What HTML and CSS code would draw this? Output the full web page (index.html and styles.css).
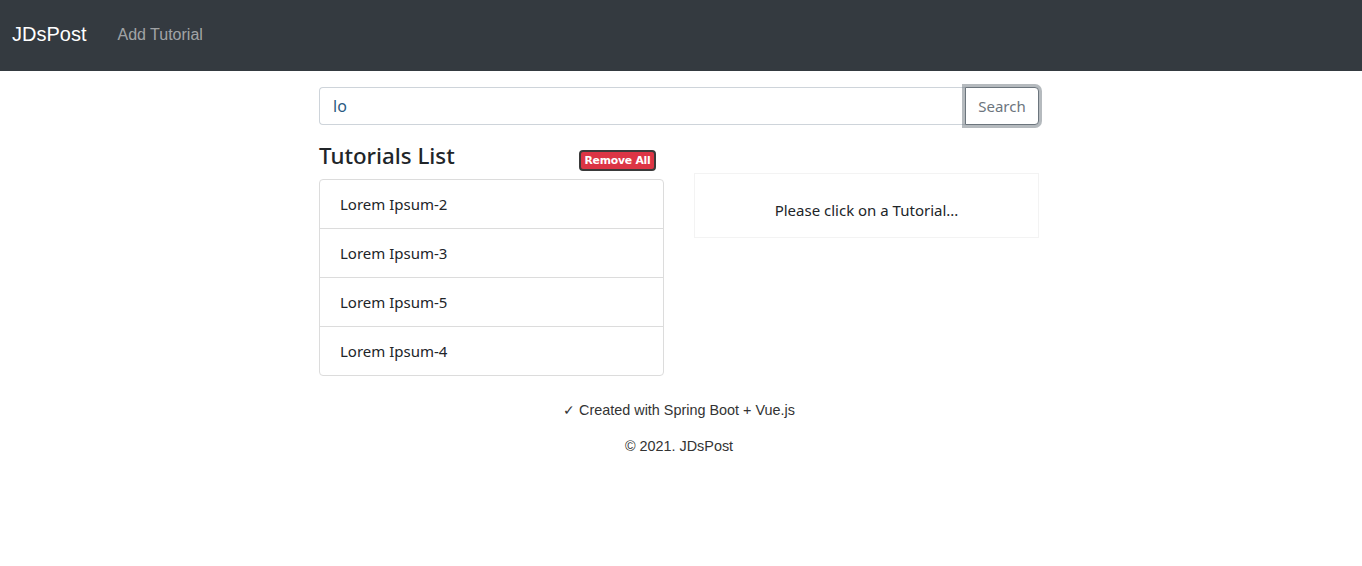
FILE: index.html
```html
<!DOCTYPE html>
<html>
<head>
<meta charset="utf-8">
<link rel="stylesheet" href="styles.css">
</head>
<body>
<nav class="navbar">
  <a class="brand">JDsPost</a>
  <a class="nav-link">Add Tutorial</a>
</nav>
<main class="container">
  <div class="input-group">
    <input class="form-control" type="text" value="lo">
    <button class="btn-search">Search</button>
  </div>
  <div class="row">
    <div class="col">
      <div class="list-head">
        <h4 class="title">Tutorials List</h4>
        <button class="btn-remove">Remove All</button>
      </div>
      <ul class="list-group">
        <li class="list-item">Lorem Ipsum-2</li>
        <li class="list-item">Lorem Ipsum-3</li>
        <li class="list-item">Lorem Ipsum-5</li>
        <li class="list-item">Lorem Ipsum-4</li>
      </ul>
    </div>
    <div class="col">
      <div class="detail">
        <p class="hint">Please click on a Tutorial...</p>
      </div>
    </div>
  </div>
  <footer class="footer">
    <p class="foot-line">✓ Created with Spring Boot + Vue.js</p>
    <p class="foot-line">© 2021. JDsPost</p>
  </footer>
</main>
</body>
</html>
```
FILE: styles.css
```css
* { box-sizing: border-box; }
body {
  margin: 0;
  font-family: "Noto Sans", "Open Sans", sans-serif;
  font-size: 16px;
  color: #212529;
  background: #fff;
}
.navbar {
  height: 71px;
  background: #343a40;
  display: flex;
  align-items: center;
  padding: 0 12px;
  font-family: "Liberation Sans", Arial, sans-serif;
}
.brand {
  color: #fff;
  font-size: 20px;
  margin-right: 31px;
  padding-bottom: 2px;
}
.nav-link {
  color: rgba(255,255,255,0.55);
  font-size: 16px;
  padding-bottom: 1px;
}
.container {
  width: 720px;
  margin-left: calc(50% - 362px);
  padding-top: 16px;
}
.input-group {
  display: flex;
  height: 38px;
  margin-bottom: 16px;
}
.form-control {
  flex: 1;
  height: 38px;
  border: 1px solid #ced4da;
  border-right: none;
  border-radius: 4px 0 0 4px;
  padding: 6px 13px;
  font-family: inherit;
  font-size: 16px;
  color: #2a5a82;
  outline: none;
}
.btn-search {
  width: 74px;
  height: 38px;
  border: 1px solid #6c757d;
  border-radius: 0 4px 4px 0;
  background: #fff;
  color: #6c757d;
  font-family: inherit;
  font-size: 15px;
  box-shadow: 0 0 0 3px rgba(108,117,125,0.5);
}
.row {
  display: flex;
  gap: 30px;
}
.col {
  flex: 1;
}
.list-head {
  display: flex;
  justify-content: space-between;
  align-items: flex-end;
  height: 30px;
  margin-bottom: 8px;
}
.title {
  margin: 0;
  font-size: 22.3px;
  font-weight: 500;
  line-height: 30px;
}
.btn-remove {
  margin-right: 8px;
  height: 21px;
  width: 77px;
  padding: 0;
  background: #dc3545;
  color: #fff;
  border: 2px solid #3a3a3a;
  border-radius: 4px;
  font-family: "DejaVu Sans", Verdana, sans-serif;
  font-weight: 700;
  font-size: 10.8px;
  letter-spacing: -0.2px;
}
.list-group {
  list-style: none;
  margin: 0;
  padding: 0;
  border: 1px solid #dcdcdc;
  border-radius: 4px;
}
.list-item {
  padding: 12px 20px;
  line-height: 24px;
  border-bottom: 1px solid #dcdcdc;
  font-size: 15px;
}
.list-item:last-child { border-bottom: none; }
.detail {
  margin-top: 32px;
  border: 1px solid #f3f3f3;
  padding: 24px 0 15px;
  text-align: center;
}
.hint {
  margin: 0;
  line-height: 24px;
  font-size: 15px;
}
.footer {
  padding-top: 26px;
  text-align: center;
  font-family: "Liberation Sans", Arial, sans-serif;
  font-size: 14.4px;
  color: #333;
}
.foot-line {
  margin: 0 0 20px;
  line-height: 16px;
}
```
